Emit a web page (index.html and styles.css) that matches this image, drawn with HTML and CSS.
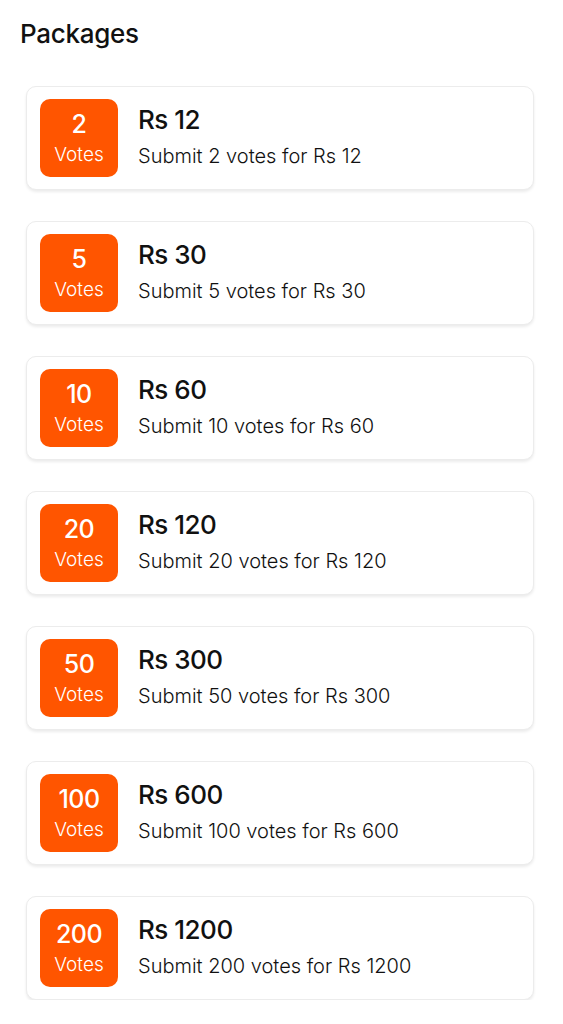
FILE: index.html
```html
<!DOCTYPE html>
<html lang="en">
<head>
    <meta charset="UTF-8">
    <meta name="viewport" content="width=device-width, initial-scale=1.0">
    <title>Packages</title>
    <link rel="stylesheet" href="styles.css">
</head>
<body>
    <main class="page">
        <h1 class="page-title">Packages</h1>
        <ul class="package-list">
            <li class="package">
                <div class="badge"><span class="badge-count">2</span><span class="badge-label">Votes</span></div>
                <div class="package-info">
                    <h2 class="package-price">Rs 12</h2>
                    <p class="package-desc">Submit 2 votes for Rs 12</p>
                </div>
            </li>
            <li class="package">
                <div class="badge"><span class="badge-count">5</span><span class="badge-label">Votes</span></div>
                <div class="package-info">
                    <h2 class="package-price">Rs 30</h2>
                    <p class="package-desc">Submit 5 votes for Rs 30</p>
                </div>
            </li>
            <li class="package">
                <div class="badge"><span class="badge-count">10</span><span class="badge-label">Votes</span></div>
                <div class="package-info">
                    <h2 class="package-price">Rs 60</h2>
                    <p class="package-desc">Submit 10 votes for Rs 60</p>
                </div>
            </li>
            <li class="package">
                <div class="badge"><span class="badge-count">20</span><span class="badge-label">Votes</span></div>
                <div class="package-info">
                    <h2 class="package-price">Rs 120</h2>
                    <p class="package-desc">Submit 20 votes for Rs 120</p>
                </div>
            </li>
            <li class="package">
                <div class="badge"><span class="badge-count">50</span><span class="badge-label">Votes</span></div>
                <div class="package-info">
                    <h2 class="package-price">Rs 300</h2>
                    <p class="package-desc">Submit 50 votes for Rs 300</p>
                </div>
            </li>
            <li class="package">
                <div class="badge"><span class="badge-count">100</span><span class="badge-label">Votes</span></div>
                <div class="package-info">
                    <h2 class="package-price">Rs 600</h2>
                    <p class="package-desc">Submit 100 votes for Rs 600</p>
                </div>
            </li>
            <li class="package">
                <div class="badge"><span class="badge-count">200</span><span class="badge-label">Votes</span></div>
                <div class="package-info">
                    <h2 class="package-price">Rs 1200</h2>
                    <p class="package-desc">Submit 200 votes for Rs 1200</p>
                </div>
            </li>
        </ul>
    </main>
</body>
</html>
```

FILE: styles.css
```css
* {
    margin: 0;
    padding: 0;
    box-sizing: border-box;
}
:root {
    --accent-color: #ff5500;
    --text-color: #111111;
    --border-color: #ececec;
}
body {
    font-family: 'Inter', sans-serif;
    background-color: #ffffff;
    color: var(--text-color);
}
.page {
    padding: 14px 29px 0 20px;
}
.page-title {
    font-size: 26px;
    font-weight: 500;
    line-height: 40px;
    letter-spacing: -0.3px;
    margin-bottom: 32px;
}
.package-list {
    list-style: none;
    display: flex;
    flex-direction: column;
    gap: 31px;
    margin-left: 6px;
}
.package {
    display: flex;
    align-items: flex-start;
    gap: 20px;
    height: 104px;
    padding: 12px 13px;
    background-color: #ffffff;
    border: 1px solid var(--border-color);
    border-radius: 10px;
    box-shadow: 0 2px 3px rgba(0, 0, 0, 0.08);
}
.badge {
    width: 78px;
    height: 78px;
    flex-shrink: 0;
    display: flex;
    flex-direction: column;
    align-items: center;
    justify-content: center;
    background-color: var(--accent-color);
    color: #ffffff;
    border-radius: 10px;
}
.badge-count {
    font-size: 25px;
    font-weight: 500;
    line-height: 30px;
    letter-spacing: -0.5px;
}
.badge-label {
    margin-top: 3px;
    font-size: 19px;
    font-weight: 300;
    line-height: 26px;
}
.package-info {
    padding-top: 4px;
}
.package-price {
    font-size: 26px;
    font-weight: 500;
    line-height: 34px;
    letter-spacing: -0.5px;
}
.package-desc {
    margin-top: 3px;
    font-size: 20px;
    font-weight: 300;
    line-height: 32px;
}
```
